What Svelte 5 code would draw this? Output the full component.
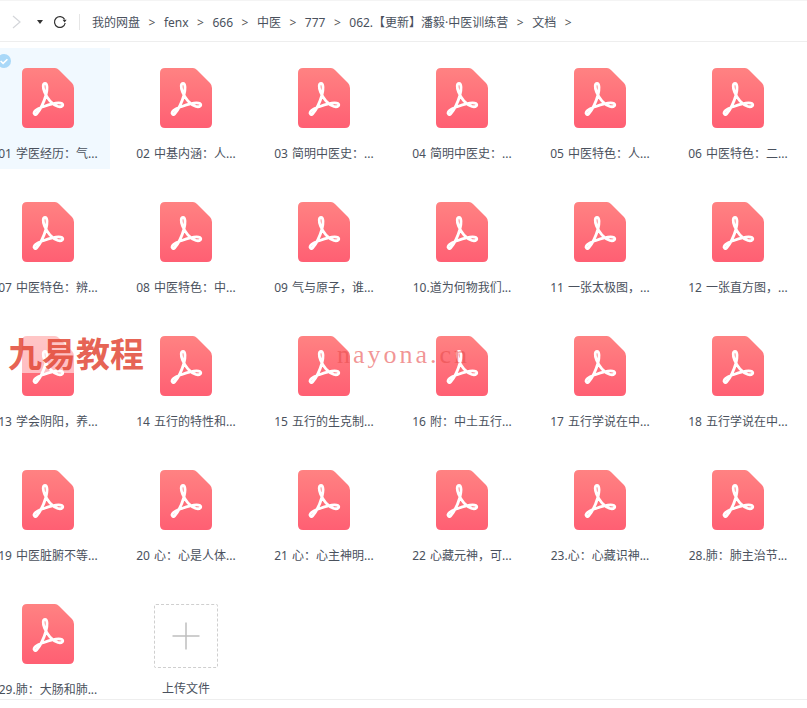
<script>
  const crumbs = ['我的网盘', 'fenx', '666', '中医', '777', '062.【更新】潘毅·中医训练营', '文档'];

  const files = [
    '01 学医经历：气...', '02 中基内涵：人...', '03 简明中医史：...', '04 简明中医史：...', '05 中医特色：人...', '06 中医特色：二...',
    '07 中医特色：辨...', '08 中医特色：中...', '09 气与原子，谁...', '10.道为何物我们...', '11 一张太极图，...', '12 一张直方图，...',
    '13 学会阴阳，养...', '14 五行的特性和...', '15 五行的生克制...', '16 附：中土五行...', '17 五行学说在中...', '18 五行学说在中...',
    '19 中医脏腑不等...', '20 心：心是人体...', '21 心：心主神明...', '22 心藏元神，可...', '23.心：心藏识神...', '28.肺：肺主治节...',
    '29.肺：大肠和肺...',
  ];
</script>

<div class="page">
  <header class="toolbar">
    <svg class="fwd" width="12" height="14" viewBox="0 0 12 14"><path d="M2 1l7 6-7 6" fill="none" stroke="#d4d6da" stroke-width="1.2"/></svg>
    <span class="caret"></span>
    <svg class="refresh" width="14" height="14" viewBox="0 0 14 14"><path d="M11.6 4.4A5.4 5.4 0 1 0 12.2 8" fill="none" stroke="#333" stroke-width="1.2"/><path d="M9.6 4.8h4l-2 2.6z" fill="#333"/></svg>
    <span class="divider"></span>
    <nav class="crumbs">
      {#each crumbs as crumb}
        <span>{crumb}</span><span class="sep">&gt;</span>
      {/each}
    </nav>
  </header>

  <main class="grid">
    {#each files as name, i}
      <div class="cell" class:selected={i === 0}>
        {#if i === 0}
          <svg class="check" width="14" height="14" viewBox="0 0 14 14"><circle cx="7" cy="7" r="7" fill="#a9d8f8"/><path d="M3.6 7l2.5 2.4 4.3-4.2" fill="none" stroke="#fff" stroke-width="1.6"/></svg>
        {/if}
        <svg class="pdf" width="52" height="60" viewBox="0 0 52 60">
          <defs>
            <linearGradient id="pdf-{i}" x1="0" y1="0" x2="0" y2="1">
              <stop offset="0" stop-color="#ff8282"/>
              <stop offset="1" stop-color="#ff5f73"/>
            </linearGradient>
          </defs>
          <path d="M5 0H33Q35 0 37 2L50 15Q52 17 52 20V55Q52 60 47 60H5Q0 60 0 55V5Q0 0 5 0Z" fill="url(#pdf-{i})"/>
          <path d="M12.500 46C10.500 44 15 41 19 39.500C26 37 35 33 40 35.500C42 37 40 39.500 36 38.500C30 36.500 25 30 22.500 24C20.500 19 21 15.500 23 15.500C25.500 15.500 25.500 21 24 27C22 34 18 42 14.500 46C13.800 46.800 13 46.600 12.500 46Z" fill="none" stroke="#fff" stroke-width="2.800" stroke-linejoin="round"/>
        </svg>
        <div class="name">{name}</div>
      </div>
    {/each}
    <div class="cell">
      <div class="upload">
        <svg width="30" height="30" viewBox="0 0 30 30"><path d="M15 1.500v27M1.500 15h27" stroke="#bfbfbf" stroke-width="1.500"/></svg>
      </div>
      <div class="name">上传文件</div>
    </div>
  </main>

  <footer class="status"></footer>

  <div class="mark-cn">九易教程</div>
  <div class="mark-en">nayona.cn</div>
</div>

<style>
  :global(body) {
    margin: 0;
    background: #fff;
  }

  .page {
    position: relative;
    display: flex;
    flex-direction: column;
    width: 807px;
    height: 708px;
    overflow: hidden;
    font-family: 'Noto Sans', 'Noto Sans CJK SC', sans-serif;
    font-size: 12px;
    color: #4a515d;
  }

  .toolbar {
    display: flex;
    flex: none;
    align-items: center;
    height: 38px;
    padding-top: 2px;
    border-top: 1px solid #f4f4f4;
    border-bottom: 1px solid #eeeeee;
  }

  .fwd {
    margin-left: 11px;
  }

  .caret {
    width: 0;
    height: 0;
    margin-left: 14px;
    border-left: 3px solid transparent;
    border-right: 3px solid transparent;
    border-top: 4px solid #333;
  }

  .refresh {
    margin-left: 10px;
  }

  .divider {
    width: 1px;
    height: 16px;
    margin-left: 12px;
    background: #e6e6e6;
  }

  .crumbs {
    display: flex;
    align-items: center;
    gap: 7.500px;
    margin-left: 12px;
    white-space: nowrap;
  }

  .sep {
    margin: 0 1px;
    color: #555;
  }

  .grid {
    display: grid;
    flex: 1;
    min-height: 0;
    grid-template-columns: repeat(6, 124px);
    grid-auto-rows: 121px;
    align-content: start;
    column-gap: 14px;
    row-gap: 13px;
    margin: 6px 0 0 -14px;
  }

  .status {
    flex: none;
    height: 8px;
    border-top: 1px solid #eeeeee;
  }

  .cell {
    position: relative;
    display: flex;
    flex-direction: column;
    align-items: center;
    padding-top: 20px;
    box-sizing: border-box;
  }

  .selected {
    background: #f1f9ff;
  }

  .check {
    position: absolute;
    top: 6px;
    left: 11px;
  }

  .pdf {
    flex: none;
  }

  .name {
    margin-top: 16px;
    line-height: 20px;
    word-spacing: 1px;
    white-space: nowrap;
  }

  .upload {
    display: flex;
    align-items: center;
    justify-content: center;
    width: 64px;
    height: 64px;
    box-sizing: border-box;
    border: 1px dashed #cfcfcf;
    border-radius: 2px;
  }

  .upload + .name {
    margin-top: 11px;
  }

  .mark-cn {
    position: absolute;
    top: 335px;
    left: 8px;
    width: 66px;
    font-size: 34px;
    font-weight: 700;
    line-height: 38px;
    white-space: nowrap;
    background: rgba(255, 255, 255, 0.55);
    color: rgba(226, 72, 54, 0.85);
  }

  .mark-en {
    position: absolute;
    top: 340px;
    left: 337px;
    font-family: 'Liberation Serif', 'DejaVu Serif', serif;
    font-size: 26px;
    line-height: 30px;
    letter-spacing: 3px;
    color: rgba(232, 78, 78, 0.6);
  }
</style>
